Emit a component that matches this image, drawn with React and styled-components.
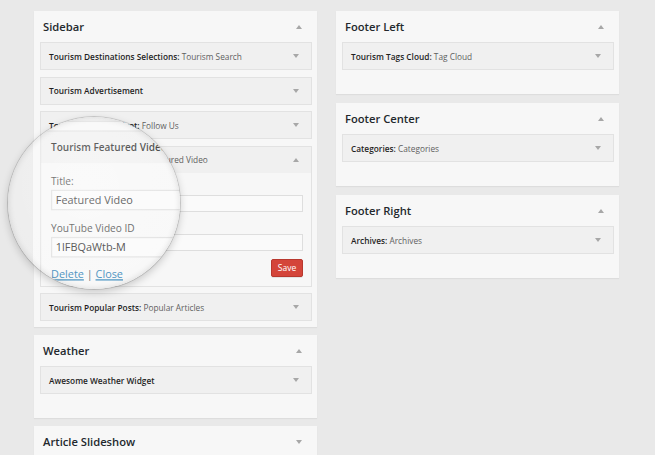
import React from "react";
import styled, { createGlobalStyle } from "styled-components";

const GlobalStyle = createGlobalStyle`
  html, body {
    margin: 0;
    padding: 0;
    background: #e9e9e9;
  }
  body {
    font-family: "Open Sans", "Liberation Sans", sans-serif;
    color: #333;
  }
`;

const Page = styled.div`
  position: relative;
  width: 655px;
  height: 455px;
  overflow: hidden;
`;

const Board = styled.div`
  display: flex;
  align-items: flex-start;
  gap: 19px;
  width: 655px;
  height: 455px;
  box-sizing: border-box;
  padding: 11px 0 0 34px;
  background: #e9e9e9;
`;

const Column = styled.div`
  width: 283px;
  display: flex;
  flex-direction: column;
  gap: ${(p) => p.$gap}px;
`;

const Panel = styled.section`
  background: #f7f7f7;
  box-shadow: 0 1px 1px rgba(0, 0, 0, 0.05);
  padding: 0 5px ${(p) => p.$pad}px 6px;
`;

const PanelHead = styled.div`
  height: 31px;
  display: flex;
  align-items: center;
  justify-content: space-between;
  padding: 0 10px 0 3px;
`;

const PanelTitle = styled.h3`
  margin: 0;
  font-size: 11.2px;
  font-weight: 600;
  color: #23282d;
`;

const WidgetList = styled.div`
  display: flex;
  flex-direction: column;
  gap: 6.5px;
`;

const WidgetBox = styled.div`
  border: 1px solid #e2e2e2;
  background: #f0f0f0;
`;

const WidgetHead = styled.div`
  height: 26px;
  display: flex;
  align-items: center;
  justify-content: space-between;
  padding: 0 12px 0 8px;
  font-size: 8.3px;
  color: #5f5f5f;
  white-space: nowrap;
`;

const Strong = styled.span`
  font-weight: 600;
  color: #1f1f1f;
`;

const WidgetBody = styled.div`
  background: #f7f7f7;
  padding: 9px 8px 9px 8px;
  display: flex;
  flex-direction: column;
`;

const Label = styled.label`
  display: block;
  font-size: 8.4px;
  line-height: 12px;
  color: #3a3a3a;
  margin: ${(p) => (p.$first ? 0 : 9)}px 0 1px;
`;

const Input = styled.input`
  display: block;
  width: 100%;
  height: 17px;
  box-sizing: border-box;
  border: 1px solid #dedede;
  background: #fafafa;
  padding: 0 3px;
  font-family: inherit;
  font-size: 9px;
  color: #222;
  outline: none;
`;

const Actions = styled.div`
  margin-top: 8px;
  display: flex;
  justify-content: space-between;
  align-items: flex-start;
`;

const Links = styled.div`
  font-size: 9px;
  line-height: 12px;
  color: #555;
  a {
    color: #1e7bb3;
    text-decoration: underline;
  }
`;

const SaveButton = styled.button`
  height: 18px;
  width: 32px;
  padding: 0;
  border: 1px solid #b8382e;
  border-radius: 2px;
  background: #d4453a;
  color: #fff;
  font-family: inherit;
  font-size: 8.5px;
  box-shadow: 0 1px 0 rgba(0, 0, 0, 0.08);
`;

const Lens = styled.div`
  position: absolute;
  left: 8px;
  top: 117px;
  width: 172px;
  height: 172px;
  border-radius: 50%;
  overflow: hidden;
  box-shadow: 0 3px 9px rgba(0, 0, 0, 0.2), 0 0 0 1px rgba(0, 0, 0, 0.14);
  &::after {
    content: "";
    position: absolute;
    inset: 0;
    border-radius: 50%;
    background: radial-gradient(circle at 45% 40%, rgba(255, 255, 255, 0.38), rgba(255, 255, 255, 0.18) 70%, rgba(0, 0, 0, 0.03));
    box-shadow: inset 0 0 6px rgba(0, 0, 0, 0.12);
    pointer-events: none;
  }
`;

const Magnified = styled.div`
  position: absolute;
  left: -8px;
  top: -117px;
  transform-origin: 39.5px 220px;
  transform: scale(1.21);
`;

function Arrow({ up }) {
  return (
    <svg width="6" height="4" viewBox="0 0 6 4">
      <path d={up ? "M0 4 L3 0 L6 4 Z" : "M0 0 L6 0 L3 4 Z"} fill="#a7a7a7" />
    </svg>
  );
}

function Widget({ title, name, open }) {
  return (
    <WidgetBox>
      <WidgetHead>
        <span>
          <Strong>{name ? title + ":" : title}</Strong>
          {name ? " " + name : ""}
        </span>
        <Arrow up={open} />
      </WidgetHead>
      {open && (
        <WidgetBody>
          <Label $first>Title:</Label>
          <Input readOnly value="Featured Video" />
          <Label>YouTube Video ID</Label>
          <Input readOnly value="1lFBQaWtb-M" />
          <Actions>
            <Links>
              <a>Delete</a> | <a>Close</a>
            </Links>
            <SaveButton>Save</SaveButton>
          </Actions>
        </WidgetBody>
      )}
    </WidgetBox>
  );
}

function Area({ title, widgets, pad = 24, closed }) {
  return (
    <Panel $pad={closed ? 0 : pad}>
      <PanelHead>
        <PanelTitle>{title}</PanelTitle>
        <Arrow up={!closed} />
      </PanelHead>
      {!closed && (
        <WidgetList>
          {widgets.map((w) => (
            <Widget key={w.title + (w.name || "")} {...w} />
          ))}
        </WidgetList>
      )}
    </Panel>
  );
}

const sidebar = [
  { title: "Tourism Destinations Selections", name: "Tourism Search" },
  { title: "Tourism Advertisement" },
  { title: "Tourism Social Widget", name: "Follow Us" },
  { title: "Tourism Featured Video", name: "Featured Video", open: true },
  { title: "Tourism Popular Posts", name: "Popular Articles" },
];

function Widgets() {
  return (
    <Board>
      <Column $gap={8}>
        <Area title="Sidebar" widgets={sidebar} pad={6} />
        <Area title="Weather" widgets={[{ title: "Awesome Weather Widget" }]} />
        <Area title="Article Slideshow" closed />
      </Column>
      <Column $gap={9}>
        <Area title="Footer Left" widgets={[{ title: "Tourism Tags Cloud", name: "Tag Cloud" }]} />
        <Area title="Footer Center" widgets={[{ title: "Categories", name: "Categories" }]} />
        <Area title="Footer Right" widgets={[{ title: "Archives", name: "Archives" }]} />
      </Column>
    </Board>
  );
}

export default function App() {
  return (
    <Page>
      <GlobalStyle />
      <Widgets />
      <Lens>
        <Magnified>
          <Widgets />
        </Magnified>
      </Lens>
    </Page>
  );
}
